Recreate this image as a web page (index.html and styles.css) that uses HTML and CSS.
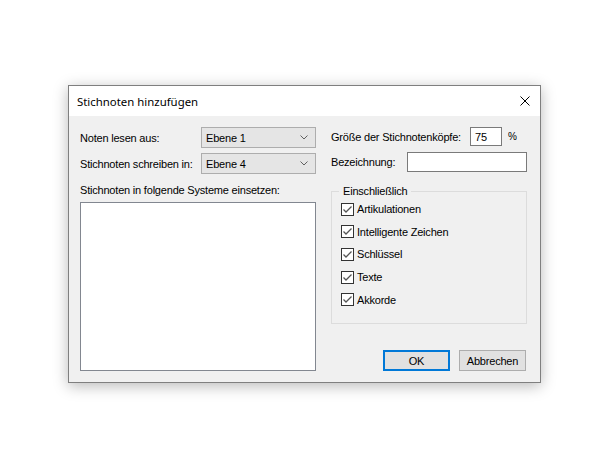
FILE: index.html
```html
<!DOCTYPE html>
<html lang="de">
<head>
<meta charset="utf-8">
<title>Stichnoten hinzufügen</title>
<link rel="stylesheet" href="styles.css">
</head>
<body>
<div class="dialog">
  <div class="titlebar">
    <span class="title">Stichnoten hinzufügen</span>
    <svg class="close" width="10" height="10" viewBox="0 0 10 10"><path d="M0.5 0.5 L9.5 9.5 M9.5 0.5 L0.5 9.5" stroke="#000" stroke-width="1" fill="none"/></svg>
  </div>
  <div class="content">
    <div class="col-left">
      <div class="row row1">
        <span class="lbl">Noten lesen aus:</span>
        <div class="select"><span>Ebene 1</span><svg width="8" height="5" viewBox="0 0 8 5"><path d="M0.5 0.5 L4 4 L7.5 0.5" stroke="#606060" fill="none"/></svg></div>
      </div>
      <div class="row row2">
        <span class="lbl">Stichnoten schreiben in:</span>
        <div class="select"><span>Ebene 4</span><svg width="8" height="5" viewBox="0 0 8 5"><path d="M0.5 0.5 L4 4 L7.5 0.5" stroke="#606060" fill="none"/></svg></div>
      </div>
      <div class="lbl list-label">Stichnoten in folgende Systeme einsetzen:</div>
      <div class="listbox"></div>
    </div>
    <div class="col-right">
      <div class="rrow rrow1">
        <span class="lbl">Größe der Stichnotenköpfe:</span>
        <div class="input small">75</div>
        <span class="lbl pct">%</span>
      </div>
      <div class="rrow rrow2">
        <span class="lbl">Bezeichnung:</span>
        <div class="input wide"></div>
      </div>
      <div class="group">
        <span class="legend">Einschließlich</span>
        <div class="check"><span class="box"><svg width="13" height="13" viewBox="0 0 13 13"><rect x="0.5" y="0.5" width="12" height="12" fill="#fff" stroke="#333"/><path d="M2.5 6.5 L5 9 L10.5 3.5" stroke="#555" stroke-width="1.3" fill="none"/></svg></span><span class="lbl">Artikulationen</span></div>
        <div class="check"><span class="box"><svg width="13" height="13" viewBox="0 0 13 13"><rect x="0.5" y="0.5" width="12" height="12" fill="#fff" stroke="#333"/><path d="M2.5 6.5 L5 9 L10.5 3.5" stroke="#555" stroke-width="1.3" fill="none"/></svg></span><span class="lbl">Intelligente Zeichen</span></div>
        <div class="check"><span class="box"><svg width="13" height="13" viewBox="0 0 13 13"><rect x="0.5" y="0.5" width="12" height="12" fill="#fff" stroke="#333"/><path d="M2.5 6.5 L5 9 L10.5 3.5" stroke="#555" stroke-width="1.3" fill="none"/></svg></span><span class="lbl">Schlüssel</span></div>
        <div class="check"><span class="box"><svg width="13" height="13" viewBox="0 0 13 13"><rect x="0.5" y="0.5" width="12" height="12" fill="#fff" stroke="#333"/><path d="M2.5 6.5 L5 9 L10.5 3.5" stroke="#555" stroke-width="1.3" fill="none"/></svg></span><span class="lbl">Texte</span></div>
        <div class="check"><span class="box"><svg width="13" height="13" viewBox="0 0 13 13"><rect x="0.5" y="0.5" width="12" height="12" fill="#fff" stroke="#333"/><path d="M2.5 6.5 L5 9 L10.5 3.5" stroke="#555" stroke-width="1.3" fill="none"/></svg></span><span class="lbl">Akkorde</span></div>
      </div>
      <div class="buttons">
        <div class="btn default">OK</div>
        <div class="btn">Abbrechen</div>
      </div>
    </div>
  </div>
</div>
</body>
</html>
```

FILE: styles.css
```css
html, body {
  margin: 0;
  padding: 0;
  background: #fff;
}
body {
  width: 611px;
  height: 476px;
  padding: 85px 0 0 68px;
  box-sizing: border-box;
  font-family: "Liberation Sans", Arial, sans-serif;
  font-size: 11px;
  letter-spacing: -0.2px;
  color: #000;
}
.dialog {
  width: 471px;
  border: 1px solid #7f7f7f;
  background: #f0f0f0;
  box-shadow: 0 3px 14px rgba(0,0,0,0.28);
}
.titlebar {
  height: 30px;
  background: #fff;
  display: flex;
  align-items: center;
  justify-content: space-between;
  padding: 0 10px 0 8px;
}
.title {
  font-family: "Noto Sans", "Open Sans", sans-serif;
  font-size: 11.4px;
  letter-spacing: 0;
  padding-top: 1px;
}
.close {
  display: block;
}
.content {
  display: flex;
  padding: 11px 13px 11px 11px;
  gap: 15px;
  height: 266px;
  box-sizing: border-box;
}
.col-left {
  width: 236px;
  display: flex;
  flex-direction: column;
}
.row {
  display: flex;
  align-items: center;
  height: 21px;
}
.row2 {
  margin-top: 5px;
}
.row .lbl {
  width: 121px;
}
.select {
  height: 19px;
  border: 1px solid #adadad;
  background: #e5e5e5;
  display: flex;
  align-items: center;
  justify-content: space-between;
  padding: 0 7px 0 4px;
  box-sizing: content-box;
  width: 102px;
}
.select svg {
  display: block;
}
.list-label {
  margin-top: 10px;
  height: 13px;
  line-height: 13px;
}
.listbox {
  margin-top: 5px;
  height: 167px;
  border: 1px solid #828790;
  background: #fff;
}
.col-right {
  width: 196px;
  display: flex;
  flex-direction: column;
}
.rrow {
  display: flex;
  align-items: center;
}
.rrow1 {
  height: 19px;
}
.rrow1 .lbl:first-child {
  width: 139px;
}
.rrow2 {
  margin-top: 6px;
  height: 20px;
}
.rrow2 .lbl {
  width: 76px;
}
.input {
  background: #fff;
  border: 1px solid #7a7a7a;
  box-sizing: border-box;
  display: flex;
  align-items: center;
}
.input.small {
  width: 32px;
  height: 19px;
  padding-left: 4px;
}
.pct {
  margin-left: 6px;
  font-size: 10px;
}
.input.wide {
  width: 120px;
  height: 20px;
}
.group {
  position: relative;
  margin-top: 19px;
  height: 125px;
  border: 1px solid #dcdcdc;
  padding: 6px 9px 0 9px;
  display: flex;
  flex-direction: column;
}
.legend {
  position: absolute;
  top: -7px;
  left: 7px;
  padding: 0 4px;
  background: #f0f0f0;
  line-height: 13px;
}
.check {
  display: flex;
  align-items: center;
  height: 22.6px;
}
.box {
  width: 13px;
  height: 13px;
  margin-right: 3px;
}
.box svg {
  display: block;
}
.buttons {
  margin-top: auto;
  display: flex;
  justify-content: flex-end;
  gap: 9px;
  padding-right: 1px;
}
.btn {
  width: 67px;
  height: 21px;
  box-sizing: border-box;
  border: 1px solid #adadad;
  background: #e1e1e1;
  display: flex;
  align-items: center;
  justify-content: center;
}
.btn.default {
  border: 2px solid #0078d7;
}
```
